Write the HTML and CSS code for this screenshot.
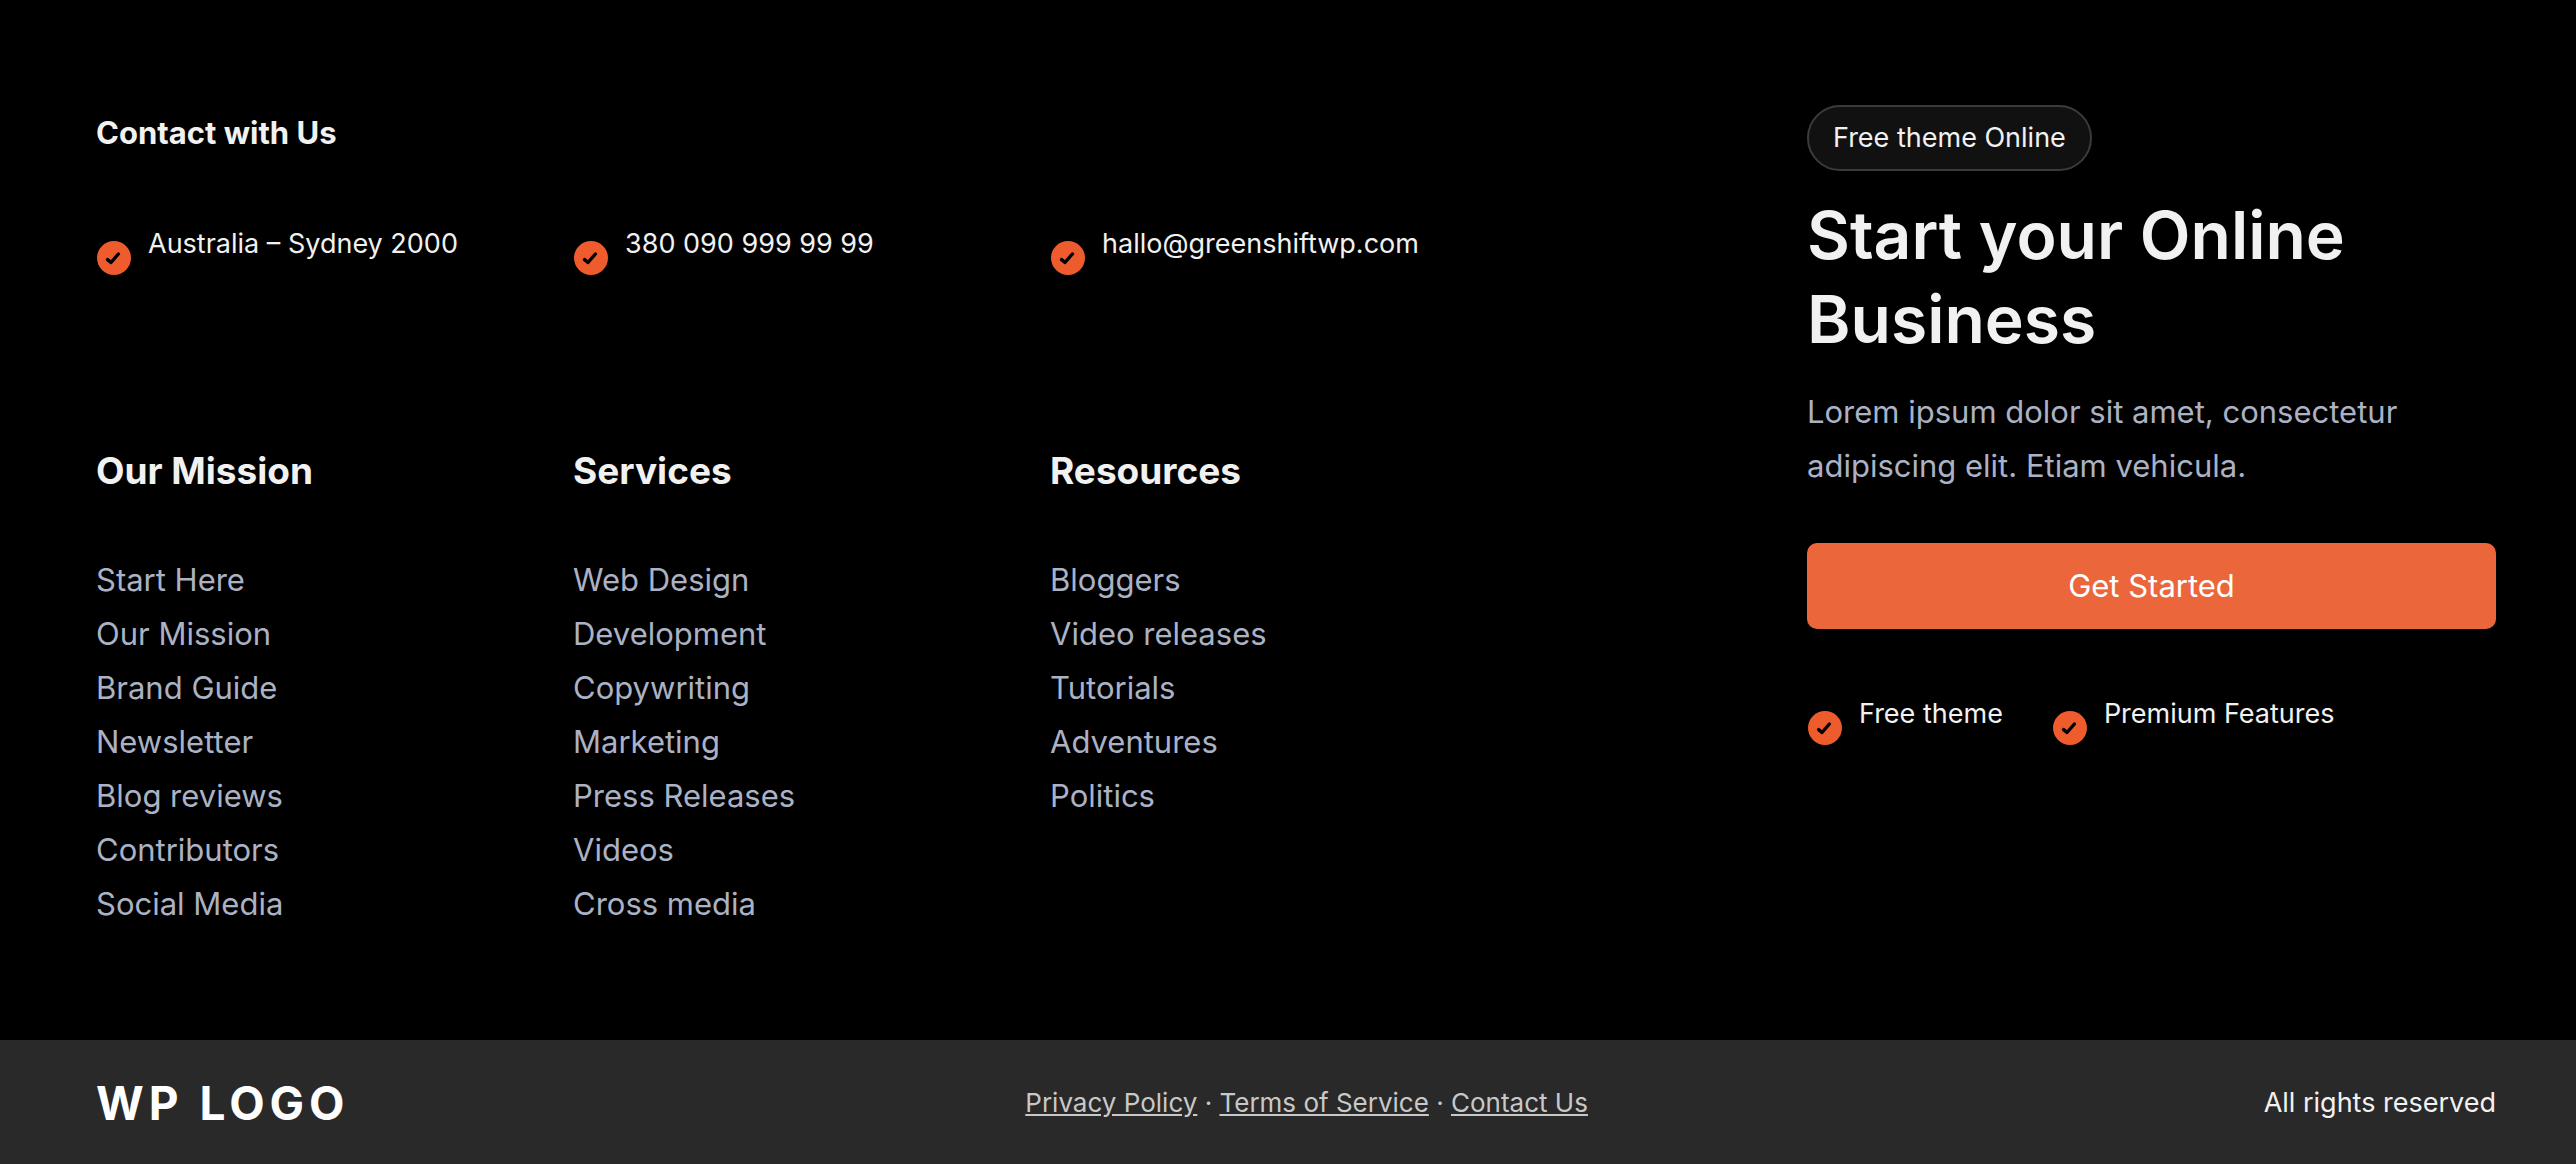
FILE: index.html
```html
<!DOCTYPE html>
<html lang="en">
<head>
  <meta charset="utf-8">
  <meta name="viewport" content="width=device-width, initial-scale=1">
  <title>Site footer</title>
  <link rel="stylesheet" href="styles.css">
</head>
<body>
  <svg class="sprite" aria-hidden="true">
    <symbol id="check" viewBox="0 0 34 34">
      <circle cx="17" cy="17" r="17" fill="#ee5b2d"/>
      <path d="M10.6 18.6 L14 21.5 L21.4 13" fill="none" stroke="#000" stroke-width="3.4" stroke-linecap="round" stroke-linejoin="round"/>
    </symbol>
  </svg>
  <footer class="footer">
    <div class="footer-main">
      <div class="info">
        <h2 class="contact-title">Contact with Us</h2>
        <ul class="columns contacts">
          <li class="check-item"><svg class="check-icon" aria-hidden="true"><use href="#check"/></svg><span>Australia – Sydney 2000</span></li>
          <li class="check-item"><svg class="check-icon" aria-hidden="true"><use href="#check"/></svg><span>380 090 999 99 99</span></li>
          <li class="check-item"><svg class="check-icon" aria-hidden="true"><use href="#check"/></svg><span>hallo@greenshiftwp.com</span></li>
        </ul>
        <div class="columns menus">
          <nav aria-labelledby="mission">
            <h3 class="menu-title" id="mission">Our Mission</h3>
            <ul class="menu">
              <li><a href="#">Start Here</a></li>
              <li><a href="#">Our Mission</a></li>
              <li><a href="#">Brand Guide</a></li>
              <li><a href="#">Newsletter</a></li>
              <li><a href="#">Blog reviews</a></li>
              <li><a href="#">Contributors</a></li>
              <li><a href="#">Social Media</a></li>
            </ul>
          </nav>
          <nav aria-labelledby="services">
            <h3 class="menu-title" id="services">Services</h3>
            <ul class="menu">
              <li><a href="#">Web Design</a></li>
              <li><a href="#">Development</a></li>
              <li><a href="#">Copywriting</a></li>
              <li><a href="#">Marketing</a></li>
              <li><a href="#">Press Releases</a></li>
              <li><a href="#">Videos</a></li>
              <li><a href="#">Cross media</a></li>
            </ul>
          </nav>
          <nav aria-labelledby="resources">
            <h3 class="menu-title" id="resources">Resources</h3>
            <ul class="menu">
              <li><a href="#">Bloggers</a></li>
              <li><a href="#">Video releases</a></li>
              <li><a href="#">Tutorials</a></li>
              <li><a href="#">Adventures</a></li>
              <li><a href="#">Politics</a></li>
            </ul>
          </nav>
        </div>
      </div>
      <section class="promo">
        <span class="badge">Free theme Online</span>
        <h2 class="promo-title">Start your Online Business</h2>
        <p class="promo-text">Lorem ipsum dolor sit amet, consectetur adipiscing elit. Etiam vehicula.</p>
        <button class="cta" type="button">Get Started</button>
        <ul class="perks">
          <li class="check-item"><svg class="check-icon" aria-hidden="true"><use href="#check"/></svg><span>Free theme</span></li>
          <li class="check-item"><svg class="check-icon" aria-hidden="true"><use href="#check"/></svg><span>Premium Features</span></li>
        </ul>
      </section>
    </div>
    <div class="footer-bar">
      <div class="logo">WP LOGO</div>
      <nav class="legal"><a href="#">Privacy Policy</a> · <a href="#">Terms of Service</a> · <a href="#">Contact Us</a></nav>
      <div class="rights">All rights reserved</div>
    </div>
  </footer>
</body>
</html>
```
FILE: styles.css
```css
* {
  box-sizing: border-box;
}

body {
  margin: 0;
  background: #000;
  color: #f1f1f1;
  font-family: Inter, "Liberation Sans", sans-serif;
  font-size: 27px;
  line-height: 34px;
}

h2,
h3,
p,
ul {
  margin: 0;
  padding: 0;
}

ul {
  list-style: none;
}

.sprite {
  position: absolute;
  width: 0;
  height: 0;
}

.footer {
  display: flex;
  flex-direction: column;
  min-height: 100vh;
}

.footer-main {
  flex: 1;
  display: grid;
  grid-template-columns: 1431fr 689fr;
  column-gap: 280px;
  padding: 105px 80px 98px 96px;
}

.columns {
  display: grid;
  grid-template-columns: repeat(3, 1fr);
}

.contact-title {
  padding-top: 8px;
  font-size: 31px;
  font-weight: 700;
  line-height: 40px;
}

.contacts {
  margin-top: 74px;
}

.check-item {
  display: flex;
  align-items: flex-start;
  gap: 16px;
}

.check-icon {
  flex: none;
  width: 36px;
  height: 34px;
  margin-top: 14px;
}

.menus {
  margin-top: 171px;
}

.menu-title {
  font-size: 37px;
  font-weight: 700;
  line-height: 50px;
}

.menu {
  margin-top: 57px;
  font-size: 31px;
  line-height: 54px;
}

.menu a {
  color: #abb2c4;
  text-decoration: none;
}

.promo {
  display: flex;
  flex-direction: column;
  align-items: flex-start;
}

.badge {
  padding: 14px 24px;
  border: 2px solid #3b3b3b;
  border-radius: 33px;
  background: #111;
}

.promo-title {
  margin-top: 22px;
  font-size: 66px;
  font-weight: 600;
  line-height: 84px;
}

.promo-text {
  margin-top: 24px;
  color: #abb2c4;
  font-size: 31px;
  line-height: 54px;
}

.cta {
  align-self: stretch;
  margin-top: 50px;
  padding: 23px;
  border: 0;
  border-radius: 10px;
  background: #eb673b;
  color: #fff;
  font: inherit;
  font-size: 31px;
  line-height: 40px;
}

.perks {
  display: flex;
  gap: 49px;
  margin-top: 68px;
}

.footer-bar {
  display: flex;
  justify-content: space-between;
  align-items: center;
  padding: 33px 80px 31px 96px;
  background: #292929;
}

.logo {
  color: #fff;
  font-size: 46px;
  font-weight: 700;
  line-height: 60px;
  letter-spacing: 5px;
}

.legal {
  color: #c8c8c8;
  font-size: 26px;
}

.legal a {
  color: inherit;
}
```
